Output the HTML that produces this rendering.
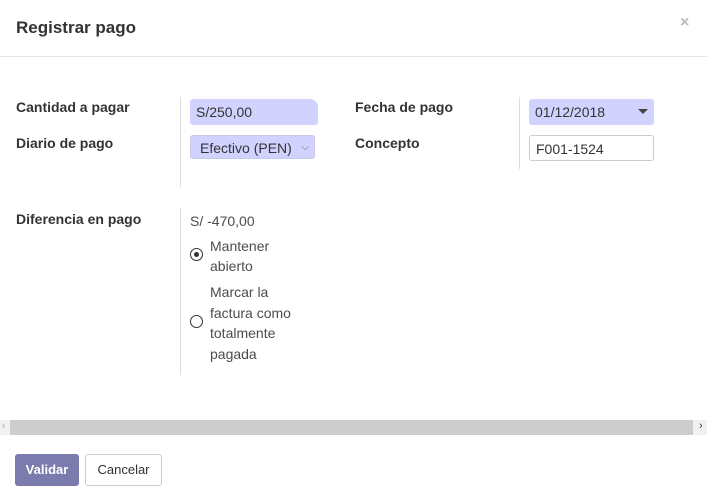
<!DOCTYPE html>
<html><head><style>
body{margin:0;width:707px;height:501px;background:#fff;font-family:"Liberation Sans",sans-serif;color:#4c4c4c;position:relative;overflow:hidden;font-size:14px}
.a{position:absolute}
.lbl{font-weight:bold;color:#333;font-size:14px}
.in{position:absolute;background:#d2d2ff;border-radius:3px;font-size:14px;color:#333;box-sizing:border-box;padding-left:8px}
</style></head><body>
<div class="a" style="left:16px;top:18px;font-size:17px;color:#333;font-weight:bold">Registrar pago</div>
<div class="a" style="left:680px;top:14px;font-size:16px;color:#bbb;font-weight:bold">×</div>
<div class="a" style="left:0;top:56px;width:707px;height:1px;background:#e5e5e5"></div>

<div class="a lbl" style="left:16px;top:99px">Cantidad a pagar</div>
<div class="a lbl" style="left:16px;top:135px">Diario de pago</div>
<div class="a" style="left:180px;top:97px;width:1px;height:90px;background:#ddd"></div>
<div class="in" style="left:190px;top:99px;width:128px;height:26px;line-height:26px;padding-left:6px;border-top-right-radius:8px">S/250,00</div>
<div class="in" style="left:190px;top:135px;width:125px;height:24px;line-height:24px;padding-left:9px;border:1px solid #c8c8e8">Efectivo (PEN)<span style="position:absolute;right:5px;font-size:10px;color:#666">⌵</span></div>

<div class="a lbl" style="left:355px;top:99px">Fecha de pago</div>
<div class="a lbl" style="left:355px;top:135px">Concepto</div>
<div class="a" style="left:519px;top:97px;width:1px;height:72px;background:#ddd"></div>
<div class="in" style="left:529px;top:99px;width:125px;height:26px;line-height:26px;padding-left:6px">01/12/2018<span style="position:absolute;right:6px;top:10px;border:5px solid transparent;border-top-color:#444;border-bottom:0"></span></div>
<div class="a" style="left:529px;top:135px;width:125px;height:26px;line-height:26px;border:1px solid #ccc;border-radius:3px;box-sizing:border-box;padding-left:6px;color:#333">F001-1524</div>

<div class="a lbl" style="left:16px;top:211px">Diferencia en pago</div>
<div class="a" style="left:180px;top:208px;width:1px;height:167px;background:#ddd"></div>
<div class="a" style="left:190px;top:213px">S/ -470,00</div>
<div class="a" style="left:190px;top:248px;width:11px;height:11px;border:1px solid #333;border-radius:50%"></div>
<div class="a" style="left:194px;top:252px;width:5px;height:5px;background:#333;border-radius:50%"></div>
<div class="a" style="left:210px;top:236px;line-height:20px">Mantener<br>abierto</div>
<div class="a" style="left:190px;top:315px;width:11px;height:11px;border:1px solid #333;border-radius:50%"></div>
<div class="a" style="left:210px;top:282px;line-height:20.5px">Marcar la<br>factura como<br>totalmente<br>pagada</div>

<div class="a" style="left:0;top:420px;width:707px;height:15px;background:#f1f1f1"></div>
<div class="a" style="left:10px;top:420px;width:683px;height:15px;background:#cdcdcd"></div>
<div class="a" style="left:2px;top:420px;font-size:11px;color:#aaa">‹</div>
<div class="a" style="left:699px;top:420px;font-size:11px;color:#333">›</div>

<div class="a" style="left:15px;top:454px;width:64px;height:32px;background:#7c7bad;border-radius:3px;color:#fff;text-align:center;line-height:32px;font-size:13px;font-weight:bold">Validar</div>
<div class="a" style="left:85px;top:454px;width:75px;height:30px;border:1px solid #ccc;border-radius:3px;text-align:center;line-height:30px;font-size:13px;color:#333">Cancelar</div>
</body></html>
